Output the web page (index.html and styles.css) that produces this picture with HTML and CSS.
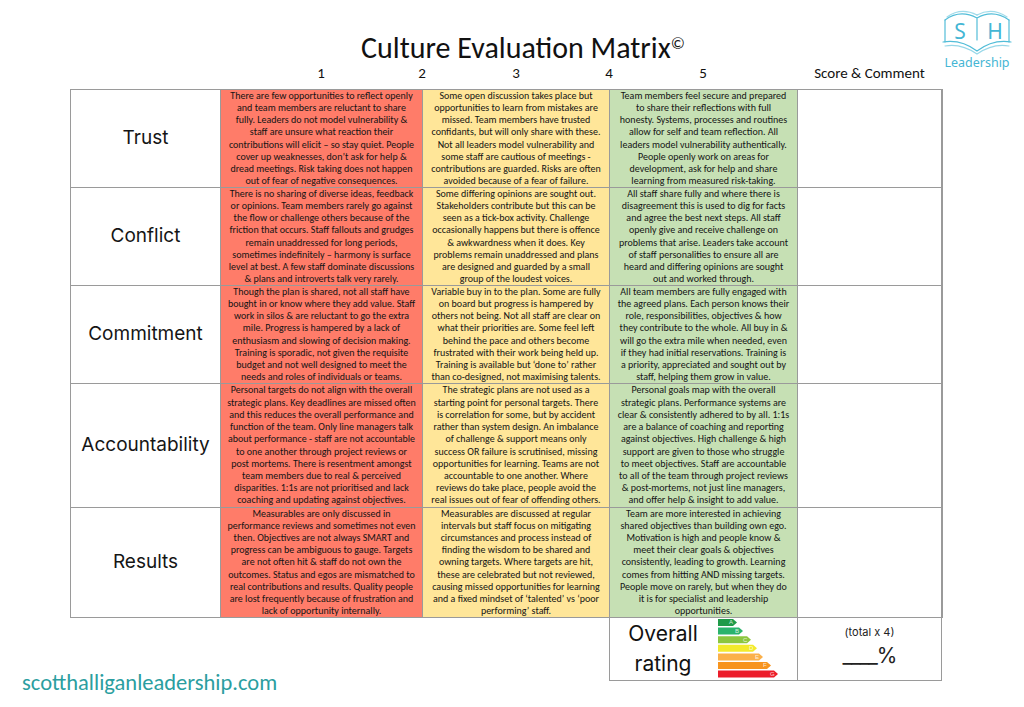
FILE: index.html
```html
<!DOCTYPE html>
<html lang="en">
<head>
<meta charset="utf-8">
<title>Culture Evaluation Matrix</title>
<link rel="stylesheet" href="styles.css">
</head>
<body>
<div class="page">
  <header class="top">
    <h1 class="title">Culture Evaluation Matrix<sup class="copy">©</sup></h1>
    <div class="logo">
      <svg width="78" height="66" viewBox="0 0 78 66" aria-label="SH Leadership logo">
        <g fill="none" stroke="#52bdd8" stroke-width="1.2" stroke-linecap="round">
          <path d="M7 14 Q22 3 39 12"/>
          <path d="M9 11 Q23 1 39 9" stroke-opacity="0.55"/>
          <path d="M39 12 Q55 3 71 14"/>
          <path d="M39 9 Q54 1 69 11" stroke-opacity="0.55"/>
          <path d="M7 14 V36"/>
          <path d="M71 14 V36"/>
          <path d="M39 13 V34"/>
          <path d="M5 36 Q23 33 39 45 Q55 33 73 36"/>
          <path d="M7 40 Q23 37 39 48 Q55 37 71 40" stroke-opacity="0.6"/>
        </g>
        <text x="22" y="33" text-anchor="middle" class="logo-l">S</text>
        <text x="57" y="33" text-anchor="middle" class="logo-l">H</text>
        <text x="39" y="61" text-anchor="middle" class="logo-s">Leadership</text>
      </svg>
    </div>
  </header>

  <div class="nums">
    <span></span>
    <span class="n">1</span>
    <span class="n">2</span>
    <span class="n">3</span>
    <span class="n">4</span>
    <span class="n">5</span>
    <span></span>
    <span class="n">Score &amp; Comment</span>
  </div>

  <div class="matrix">
    <div class="c lbl">Trust</div>
    <div class="c red">There are few opportunities to reflect openly<br>and team members are reluctant to share<br>fully. Leaders do not model vulnerability &amp;<br>staff are unsure what reaction their<br>contributions will elicit – so stay quiet. People<br>cover up weaknesses, don’t ask for help &amp;<br>dread meetings. Risk taking does not happen<br>out of fear of negative consequences.</div>
    <div class="c yel">Some open discussion takes place but<br>opportunities to learn from mistakes are<br>missed. Team members have trusted<br>confidants, but will only share with these.<br>Not all leaders model vulnerability and<br>some staff are cautious of meetings -<br>contributions are guarded. Risks are often<br>avoided because of a fear of failure.</div>
    <div class="c grn">Team members feel secure and prepared<br>to share their reflections with full<br>honesty. Systems, processes and routines<br>allow for self and team reflection. All<br>leaders model vulnerability authentically.<br>People openly work on areas for<br>development, ask for help and share<br>learning from measured risk-taking.</div>
    <div class="c blank"></div>

    <div class="c lbl">Conflict</div>
    <div class="c red">There is no sharing of diverse ideas, feedback<br>or opinions. Team members rarely go against<br>the flow or challenge others because of the<br>friction that occurs. Staff fallouts and grudges<br>remain unaddressed for long periods,<br>sometimes indefinitely – harmony is surface<br>level at best. A few staff dominate discussions<br>&amp; plans and introverts talk very rarely.</div>
    <div class="c yel">Some differing opinions are sought out.<br>Stakeholders contribute but this can be<br>seen as a tick-box activity. Challenge<br>occasionally happens but there is offence<br>&amp; awkwardness when it does. Key<br>problems remain unaddressed and plans<br>are designed and guarded by a small<br>group of the loudest voices.</div>
    <div class="c grn">All staff share fully and where there is<br>disagreement this is used to dig for facts<br>and agree the best next steps. All staff<br>openly give and receive challenge on<br>problems that arise. Leaders take account<br>of staff personalities to ensure all are<br>heard and differing opinions are sought<br>out and worked through.</div>
    <div class="c blank"></div>

    <div class="c lbl">Commitment</div>
    <div class="c red">Though the plan is shared, not all staff have<br>bought in or know where they add value. Staff<br>work in silos &amp; are reluctant to go the extra<br>mile. Progress is hampered by a lack of<br>enthusiasm and slowing of decision making.<br>Training is sporadic, not given the requisite<br>budget and not well designed to meet the<br>needs and roles of individuals or teams.</div>
    <div class="c yel">Variable buy in to the plan. Some are fully<br>on board but progress is hampered by<br>others not being. Not all staff are clear on<br>what their priorities are. Some feel left<br>behind the pace and others become<br>frustrated with their work being held up.<br>Training is available but ‘done to’ rather<br>than co-designed, not maximising talents.</div>
    <div class="c grn">All team members are fully engaged with<br>the agreed plans. Each person knows their<br>role, responsibilities, objectives &amp; how<br>they contribute to the whole. All buy in &amp;<br>will go the extra mile when needed, even<br>if they had initial reservations. Training is<br>a priority, appreciated and sought out by<br>staff, helping them grow in value.</div>
    <div class="c blank"></div>

    <div class="c lbl">Accountability</div>
    <div class="c red">Personal targets do not align with the overall<br>strategic plans. Key deadlines are missed often<br>and this reduces the overall performance and<br>function of the team. Only line managers talk<br>about performance - staff are not accountable<br>to one another through project reviews or<br>post mortems. There is resentment amongst<br>team members due to real &amp; perceived<br>disparities. 1:1s are not prioritised and lack<br>coaching and updating against objectives.</div>
    <div class="c yel">The strategic plans are not used as a<br>starting point for personal targets. There<br>is correlation for some, but by accident<br>rather than system design. An imbalance<br>of challenge &amp; support means only<br>success OR failure is scrutinised, missing<br>opportunities for learning. Teams are not<br>accountable to one another. Where<br>reviews do take place, people avoid the<br>real issues out of fear of offending others.</div>
    <div class="c grn">Personal goals map with the overall<br>strategic plans. Performance systems are<br>clear &amp; consistently adhered to by all. 1:1s<br>are a balance of coaching and reporting<br>against objectives. High challenge &amp; high<br>support are given to those who struggle<br>to meet objectives. Staff are accountable<br>to all of the team through project reviews<br>&amp; post-mortems, not just line managers,<br>and offer help &amp; insight to add value.</div>
    <div class="c blank"></div>

    <div class="c lbl">Results</div>
    <div class="c red">Measurables are only discussed in<br>performance reviews and sometimes not even<br>then. Objectives are not always SMART and<br>progress can be ambiguous to gauge. Targets<br>are not often hit &amp; staff do not own the<br>outcomes. Status and egos are mismatched to<br>real contributions and results. Quality people<br>are lost frequently because of frustration and<br>lack of opportunity internally.</div>
    <div class="c yel">Measurables are discussed at regular<br>intervals but staff focus on mitigating<br>circumstances and process instead of<br>finding the wisdom to be shared and<br>owning targets. Where targets are hit,<br>these are celebrated but not reviewed,<br>causing missed opportunities for learning<br>and a fixed mindset of ‘talented’ vs ‘poor<br>performing’ staff.</div>
    <div class="c grn">Team are more interested in achieving<br>shared objectives than building own ego.<br>Motivation is high and people know &amp;<br>meet their clear goals &amp; objectives<br>consistently, leading to growth. Learning<br>comes from hitting AND missing targets.<br>People move on rarely, but when they do<br>it is for specialist and leadership<br>opportunities.</div>
    <div class="c blank"></div>
  </div>

  <footer class="foot">
    <div class="url">scotthalliganleadership.com</div>
    <div class="rating">
      <div class="r-left">
        <div class="r-label">Overall<br>rating</div>
        <svg class="bars" width="62" height="62" viewBox="0 0 62 62" aria-label="energy rating scale">
          <polygon points="0,1 15,1 19,4.5 15,8 0,8" fill="#1f9a48"/>
          <polygon points="0,9.6 21,9.6 25,13.1 21,16.6 0,16.6" fill="#2bb36c"/>
          <polygon points="0,18.2 29,18.2 33,21.7 29,25.2 0,25.2" fill="#8cc63f"/>
          <polygon points="0,26.8 35,26.8 39,30.3 35,33.8 0,33.8" fill="#f3ea2c"/>
          <polygon points="0,35.4 41,35.4 45,38.9 41,42.4 0,42.4" fill="#fbb04a"/>
          <polygon points="0,44 49,44 53,47.5 49,51 0,51" fill="#f7941e"/>
          <polygon points="0,52.6 56,52.6 60,56.1 56,59.6 0,59.6" fill="#ec1c2a"/>
          <g class="bar-t">
            <text x="11" y="6.4">A</text>
            <text x="17" y="15">B</text>
            <text x="25" y="23.6">C</text>
            <text x="31" y="32.2">D</text>
            <text x="37" y="40.8">E</text>
            <text x="45" y="49.4">F</text>
            <text x="52" y="58">G</text>
          </g>
        </svg>
      </div>
      <div class="r-right">
        <div class="total">(total x 4)</div>
        <div class="pct">____%</div>
      </div>
    </div>
  </footer>
</div>
</body>
</html>
```

FILE: styles.css
```css
html, body {
  margin: 0;
  padding: 0;
  background: #ffffff;
}

.page {
  width: 1024px;
  height: 707px;
  overflow: hidden;
  color: #1b1b1b;
  font-family: Carlito, "Liberation Sans Narrow", "Liberation Sans", sans-serif;
}

.top {
  display: grid;
  grid-template-columns: 1fr auto 1fr;
  height: 64px;
}

.title {
  grid-column: 2;
  margin: 0;
  padding: 30px 0 0 22px;
  font-weight: normal;
  font-size: 30px;
  line-height: 36px;
  color: #111;
  white-space: nowrap;
}

.copy {
  font-size: 17px;
  vertical-align: top;
  position: relative;
  top: -4px;
}

.logo {
  grid-column: 3;
  justify-self: end;
  margin: 6px 8px 0 0;
}

.logo-l {
  font-family: "Noto Sans", sans-serif;
  font-size: 21px;
  fill: #45b6d4;
}

.logo-s {
  font-family: "Noto Sans", sans-serif;
  font-size: 12.5px;
  fill: #45b6d4;
}

.nums {
  display: grid;
  grid-template-columns: 201px 100px 102px 86px 100px 88px 50px 145px;
  margin-left: 70px;
  height: 25px;
  align-items: start;
  font-size: 15px;
  line-height: 18px;
  color: #111;
}

.n {
  text-align: center;
  white-space: nowrap;
}

.matrix {
  display: grid;
  grid-template-columns: 149px 201px 186px 187px 143px;
  grid-template-rows: 97px 97px 97px 123px 109px;
  gap: 1px;
  margin-left: 70px;
  width: 871px;
  background: #9a9a9a;
  border: 1px solid #9a9a9a;
  box-sizing: content-box;
}

.c {
  display: flex;
  align-items: center;
  justify-content: center;
  text-align: center;
  background: #fff;
  font-size: 10px;
  line-height: 12.2px;
  white-space: nowrap;
  color: #141414;
}

.lbl {
  font-family: Inter, "Noto Sans", sans-serif;
  font-size: 19px;
  color: #151515;
}

.red { background: #ff7c69; }
.yel { background: #ffe699; }
.grn { background: #c6e0b4; }
.blank { background: #fff; }

.foot {
  display: grid;
  grid-template-columns: 609px 333px;
  height: 90px;
}

.url {
  align-self: start;
  padding: 51px 0 0 22px;
  font-size: 22.5px;
  color: #2b9ea0;
  white-space: nowrap;
}

.rating {
  display: grid;
  grid-template-columns: 187px 143px;
  grid-template-rows: 62px;
  gap: 1px;
  align-self: start;
  justify-self: start;
  background: #9a9a9a;
  border: 1px solid #9a9a9a;
  border-top: 0;
}

.r-left {
  display: flex;
  align-items: center;
  background: #fff;
}

.r-label {
  width: 106px;
  text-align: center;
  font-family: Inter, "Noto Sans", sans-serif;
  font-size: 21px;
  line-height: 30px;
  color: #111;
}

.bars {
  display: block;
  margin-left: 2px;
}

.bar-t text {
  font-family: "Liberation Sans", sans-serif;
  font-size: 6px;
  fill: #ffffff;
  fill-opacity: 0.8;
}

.r-right {
  display: flex;
  flex-direction: column;
  align-items: center;
  background: #fff;
  font-family: Inter, "Noto Sans", sans-serif;
  color: #222;
}

.total {
  margin-top: 7px;
  font-size: 11px;
}

.pct {
  margin-top: 4px;
  font-size: 21px;
  letter-spacing: -1px;
}
```
